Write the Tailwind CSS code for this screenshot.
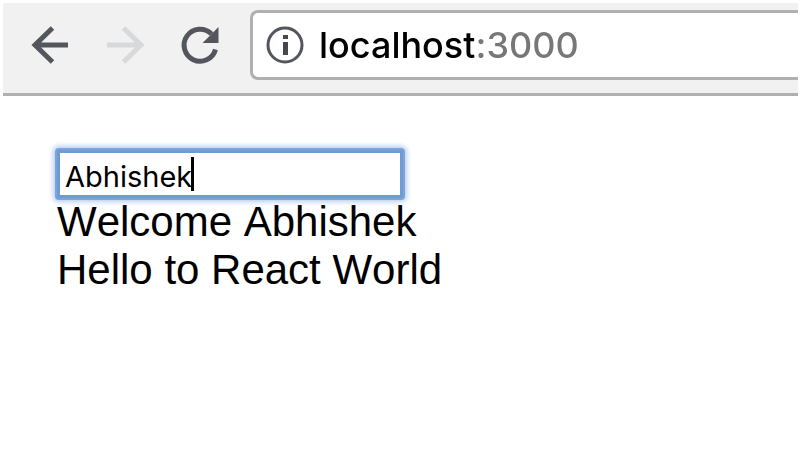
<!DOCTYPE html>
<html lang="en">
<head>
    <meta charset="UTF-8">
    <meta name="viewport" content="width=device-width, initial-scale=1.0">
    <title>React App</title>
    <script src="https://cdn.jsdelivr.net/npm/@tailwindcss/browser@4"></script>
</head>
<body class="min-h-screen overflow-x-hidden bg-white font-['Liberation_Sans',sans-serif] text-black">

    <!-- Browser toolbar -->
    <header class="mx-[3px] mt-[3px] flex items-center border-b-3 border-[#b0b0b0] bg-[#f1f1f1] pt-[7px] pb-[13px] pl-6">
        <nav class="flex shrink-0 gap-[27px]">
            <button type="button" aria-label="Back" class="size-12 text-[#53565c]">
                <svg class="size-12" viewBox="0 0 48 48" fill="none" stroke="currentColor" stroke-width="5">
                    <path d="M41 24H8M25.500 7L8 24l17.500 17" />
                </svg>
            </button>
            <button type="button" aria-label="Forward" disabled class="size-12 text-[#d8d9da]">
                <svg class="size-12" viewBox="0 0 48 48" fill="none" stroke="currentColor" stroke-width="5">
                    <path d="M5 24h33M21.500 7L39 24 21.500 41" />
                </svg>
            </button>
            <button type="button" aria-label="Reload" class="size-12 text-[#53565c]">
                <svg class="size-12" viewBox="0 0 48 48" fill="none">
                    <path d="M38.500 28.500A16 16 0 1 1 34.500 13" stroke="currentColor" stroke-width="5" />
                    <path d="M41.500 6v16H25.500z" fill="currentColor" />
                </svg>
            </button>
        </nav>

        <!-- Address bar -->
        <div class="ml-[25px] flex h-[70px] min-w-0 flex-1 items-center gap-3 rounded-l-lg border-3 border-r-0 border-[#b0b0b0] bg-white pl-3">
            <svg class="size-10 shrink-0" viewBox="0 0 40 40" fill="none" aria-hidden="true">
                <circle cx="20" cy="20" r="17" stroke="#53565c" stroke-width="3" />
                <path d="M18 10h5v4h-5zM18 17h5v13h-5z" fill="#45484d" />
            </svg>
            <!-- The port is greyed out after the host name -->
            <input type="text" aria-label="Address" value="localhost:3000" spellcheck="false"
                class="min-w-0 flex-1 bg-[linear-gradient(to_right,#000_157px,#777_157px)] bg-clip-text pl-[2px] font-[Inter,sans-serif] text-[36px] leading-12 font-medium text-transparent outline-none">
        </div>
    </header>

    <!-- Page content -->
    <main class="px-[57px] pt-[54px]">
        <div class="relative w-[346px]">
            <input type="text" aria-label="Name" value="Abhishek" spellcheck="false"
                class="block h-12 w-full rounded-xs border-3 border-[#6f9bd4] bg-white pt-1 pl-[5px] font-[Inter,sans-serif] text-[29px] leading-9 shadow-[0_0_0_2px_#7ba5da,0_0_5px_4px_#b5cef0] outline-none">
            <!-- Text cursor -->
            <span class="absolute top-[7px] left-[134px] h-[34px] w-[3px] bg-black"></span>
        </div>
        <p class="text-[42px] leading-12 [font-kerning:none]">Welcome Abhishek</p>
        <p class="text-[42px] leading-12 [font-kerning:none]">Hello to React World</p>
    </main>

</body>
</html>
